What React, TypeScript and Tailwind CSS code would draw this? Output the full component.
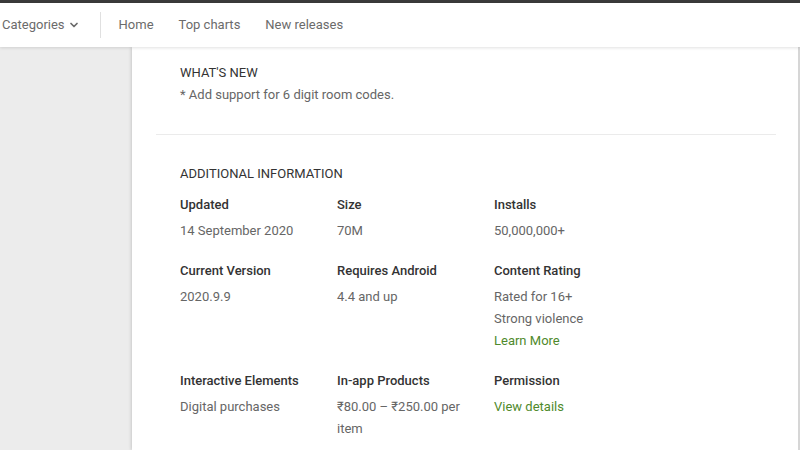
import { ChevronDown } from "lucide-react";

const rows = [
  [
    { label: "Updated", lines: ["14 September 2020"] },
    { label: "Size", lines: ["70M"] },
    { label: "Installs", lines: ["50,000,000+"] },
  ],
  [
    { label: "Current Version", lines: ["2020.9.9"] },
    { label: "Requires Android", lines: ["4.4 and up"] },
    { label: "Content Rating", lines: ["Rated for 16+", "Strong violence"], link: "Learn More" },
  ],
  [
    { label: "Interactive Elements", lines: ["Digital purchases"] },
    { label: "In-app Products", lines: ["₹80.00 – ₹250.00 per item"] },
    { label: "Permission", lines: [], link: "View details" },
  ],
];

const App = () => {
  return (
    <div className="w-[800px] h-[450px] overflow-hidden bg-[#ececec] font-['Roboto',sans-serif] flex flex-col">
      <div className="h-[3px] bg-[#3a3a3a] shrink-0" />
      <header className="h-[44px] shrink-0 bg-white flex items-center shadow-[0_1px_3px_rgba(0,0,0,0.12)] relative z-10">
        <button className="flex items-center gap-[3px] pl-[2px] pr-[20px] text-[13px] text-[#6b6b6b]">
          Categories
          <ChevronDown size={12} strokeWidth={3.5} />
        </button>
        <div className="w-px h-[26px] bg-[#e0e0e0]" />
        <nav className="flex items-center gap-[25px] pl-[18px] text-[13px] text-[#6b6b6b]">
          <span>Home</span>
          <span>Top charts</span>
          <span>New releases</span>
        </nav>
      </header>
      <div className="flex flex-1 min-h-0">
        <aside className="w-[132px] shrink-0 bg-[#ececec]" />
        <main className="flex-1 bg-white shadow-[-1px_0_3px_rgba(0,0,0,0.15)] border-r-2 border-[#d6d6d6] pl-[24px] pr-[22px]">
          <section className="pl-[24px] pt-[16px] pb-[29px]">
            <h2 className="text-[13px] text-[#333] leading-[20px]">WHAT'S NEW</h2>
            <p className="text-[13px] text-[#666] leading-[20px] mt-[2px]">
              * Add support for 6 digit room codes.
            </p>
          </section>
          <div className="h-px bg-[#ebebeb]" />
          <section className="pl-[24px] pt-[29px]">
            <h2 className="text-[13px] text-[#333] leading-[20px]">ADDITIONAL INFORMATION</h2>
            <div className="mt-[11px] flex flex-col gap-[19px]">
              {rows.map((row, i) => (
                <div key={i} className="grid grid-cols-[157px_157px_157px]">
                  {row.map((item) => (
                    <div key={item.label} className="pr-[14px]">
                      <div className="text-[13px] font-medium text-[#333] leading-[20px]">
                        {item.label}
                      </div>
                      <div className="mt-[5px] text-[13px] text-[#666] leading-[22px]">
                        {item.lines.map((l) => (
                          <div key={l}>{l}</div>
                        ))}
                        {item.link && <div className="text-[#4f8a2c]">{item.link}</div>}
                      </div>
                    </div>
                  ))}
                </div>
              ))}
            </div>
          </section>
        </main>
      </div>
    </div>
  );
};

export default App;
